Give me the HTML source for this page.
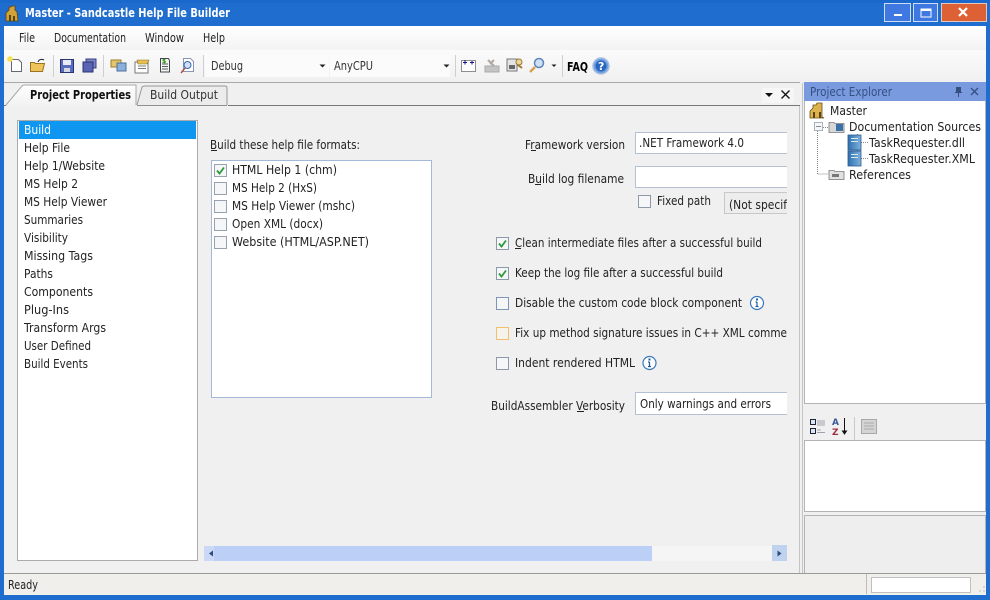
<!DOCTYPE html>
<html><head><meta charset="utf-8"><style>
html,body{margin:0;padding:0;background:#f0f0f0;overflow:hidden}
svg{display:block}
text{font-family:"DejaVu Sans",sans-serif;font-size:12px;fill:#222}
.b{font-weight:bold}
</style></head><body>
<svg width="990" height="600" viewBox="0 0 990 600" xmlns="http://www.w3.org/2000/svg">
<defs>
<linearGradient id="mb" x1="0" y1="0" x2="0" y2="1"><stop offset="0" stop-color="#fff"/><stop offset="1" stop-color="#f3f3f3"/></linearGradient>
<linearGradient id="tb" x1="0" y1="0" x2="0" y2="1"><stop offset="0" stop-color="#fbfbfb"/><stop offset="1" stop-color="#f0f0f0"/></linearGradient>
<linearGradient id="doc" x1="0" y1="0" x2="1" y2="0"><stop offset="0" stop-color="#2f6fb0"/><stop offset="1" stop-color="#7fb2dc"/></linearGradient>
<linearGradient id="tab" x1="0" y1="0" x2="0" y2="1"><stop offset="0" stop-color="#fff"/><stop offset="1" stop-color="#f2f2f2"/></linearGradient>
<clipPath id="rc"><rect x="490" y="120" width="297" height="300"/></clipPath>
</defs>
<rect width="990" height="600" fill="#1f6dce"/>
<rect y="0" width="990" height="3" fill="#1a68cb"/>
<rect x="4" y="26" width="982" height="569" fill="#f0f0f0"/>
<rect x="4" y="26" width="982" height="24" fill="url(#mb)"/>
<rect x="4" y="50" width="982" height="32" fill="url(#tb)"/>
<rect x="4" y="82" width="796" height="1" fill="#a8a8a8"/>

<!-- Title bar -->
<path d="M6 21V13l3-3V7h2l1-1h3v4l2 2 1 9z" fill="#d0a238" stroke="#5c4410" stroke-width=".8"/>
<path d="M9 21v-6h2v6zM13 21v-5h2v5z" fill="#5c4410"/>
<text class="b" x="25" y="17" textLength="205" lengthAdjust="spacingAndGlyphs" style="fill:#fff">Master - Sandcastle Help File Builder</text>
<rect x="884.500" y="3.500" width="26" height="18" fill="#3f78e0" stroke="#cfdcf5"/>
<rect x="894" y="14" width="8" height="2" fill="#fff"/>
<rect x="913.500" y="3.500" width="24" height="18" fill="#3f78e0" stroke="#cfdcf5"/>
<rect x="921" y="9" width="10" height="8" fill="none" stroke="#fff" stroke-width="1"/><rect x="921" y="9" width="10" height="2" fill="#fff"/>
<rect x="941.500" y="3.500" width="45" height="18" fill="#de6136" stroke="#e6c8b8"/>
<path d="M959 8l8 8M967 8l-8 8" stroke="#fff" stroke-width="2.200" fill="none"/>

<!-- Menu -->
<text x="19" y="42" textLength="16" lengthAdjust="spacingAndGlyphs">File</text>
<text x="54" y="42" textLength="72" lengthAdjust="spacingAndGlyphs">Documentation</text>
<text x="145" y="42" textLength="39" lengthAdjust="spacingAndGlyphs">Window</text>
<text x="203" y="42" textLength="22" lengthAdjust="spacingAndGlyphs">Help</text>

<!-- Toolbar icons -->
<path d="M11.500 59.500h7l3 3v9h-10z" fill="#fff" stroke="#667"/>
<circle cx="10" cy="59" r="2.800" fill="#f3e24a"/>
<path d="M30.500 62.500h4l1 1h9l-2 8h-12z" fill="#eec35a" stroke="#9a7420"/>
<path d="M38 62c1-3 4-3 6-2" fill="none" stroke="#223"/>
<rect x="60.500" y="59.500" width="13" height="13" fill="#5a6cc0" stroke="#2a3570"/><rect x="63" y="60" width="8" height="5" fill="#e8ecf8"/><rect x="64" y="68" width="6" height="4" fill="#d5d8e5"/>
<rect x="86" y="59" width="10" height="9" fill="#7a84c8" stroke="#3b4380"/><rect x="83" y="62" width="10" height="10" fill="#5a64b4" stroke="#2a3570"/>
<rect x="111" y="60" width="10" height="7" fill="#e7c667" stroke="#9a7d30"/><rect x="117" y="63" width="9" height="8" fill="#8cb0dc" stroke="#4a6f9e"/>
<rect x="135" y="62" width="13" height="11" fill="#fff" stroke="#777"/><path d="M137 60l12 0-2 4h-9z" fill="#e6c050" stroke="#8a6d20" stroke-width=".6"/><path d="M138 66h8M138 68.500h8" stroke="#777"/>
<path d="M160.500 58.500h8l1 2v11.500h-9z" fill="#f4f8e8" stroke="#445"/><path d="M162 64h6M162 66.500h6M162 69h6" stroke="#556"/><text x="162" y="63" style="font-size:6px;fill:#180" class="b">$</text>
<path d="M183.500 58.500h7l3 3v10h-10z" fill="#fff" stroke="#8a95b5"/><circle cx="187.500" cy="65" r="3.500" fill="#cfdff6" stroke="#3a66b0"/><path d="M185 68l-4 5" stroke="#b05040" stroke-width="1.500"/>
<path d="M53.500 55v22M103.500 55v22M203.500 55v22M455.500 55v22M562.500 55v22" stroke="#cfcfcf"/>

<!-- Combos -->
<rect x="205" y="55" width="124" height="22" fill="#fbfbfb"/>
<text x="211" y="70" textLength="32" lengthAdjust="spacingAndGlyphs" style="fill:#333">Debug</text>
<path d="M319.500 64.500h6l-3 3z" fill="#222"/>
<rect x="330" y="55" width="120" height="22" fill="#fbfbfb"/>
<text x="334" y="70" textLength="39" lengthAdjust="spacingAndGlyphs" style="fill:#333">AnyCPU</text>
<path d="M443.500 64.500h6l-3 3z" fill="#222"/>

<!-- Right toolbar icons -->
<rect x="461.500" y="60.500" width="14" height="11" fill="#fff" stroke="#222" stroke-dasharray="1 1"/><path d="M463 62.500h4M465 60.500v4M470 62.500h4M472 60.500v4" stroke="#14148c"/>
<path d="M485 66h14v6h-14z" fill="#c4c4c4" stroke="#aaa"/><path d="M488 60l6 6M494 60l-4 4" stroke="#b0a8a0" stroke-width="2"/>
<rect x="507" y="59" width="10" height="12" fill="#e4e4e4" stroke="#777"/><rect x="509" y="65" width="6" height="4" fill="#666"/><circle cx="519" cy="62" r="3" fill="#e8d8a0" stroke="#a07830"/><path d="M518 65l4 3" stroke="#a07830" stroke-width="2"/>
<circle cx="539" cy="63" r="4.500" fill="#cfe0f4" stroke="#5c86b8" stroke-width="1.500"/><path d="M535 67l-5 5" stroke="#d9a050" stroke-width="2.500"/>
<path d="M551.500 64.500h5l-2.500 2.500z" fill="#222"/>
<text class="b" x="567" y="71" textLength="21" lengthAdjust="spacingAndGlyphs" style="fill:#000;font-size:12px">FAQ</text>
<circle cx="601" cy="66" r="8" fill="#6f9ee0" stroke="#a8bfe0" stroke-width="1.500"/><circle cx="601" cy="66" r="5.500" fill="#2866c0"/><text class="b" x="598" y="70" style="font-size:11px;fill:#fff">?</text>

<!-- Tabs -->
<path d="M6 105L22 86q1-1 3-1H136v20" fill="url(#tab)" stroke="#a8a8a8"/>
<text class="b" x="30" y="99" textLength="101" lengthAdjust="spacingAndGlyphs" style="fill:#111">Project Properties</text>
<path d="M137 105l5-18q1-1 3-1H225q2 0 2 2v17" fill="#ececec" stroke="#999"/>
<text x="150" y="99" textLength="68" lengthAdjust="spacingAndGlyphs" style="fill:#333">Build Output</text>
<rect x="228" y="105" width="572" height="1" fill="#777"/><rect x="4" y="105" width="2" height="1" fill="#777"/><rect x="137" y="105" width="90" height="1" fill="#8f8f8f"/>
<rect x="762" y="88" width="32" height="15" fill="#f6f6f6"/>
<path d="M765 93h8l-4 4z" fill="#111"/>
<path d="M781.500 90.500l8 8M789.500 90.500l-8 8" stroke="#111" stroke-width="1.300"/>

<!-- Left list -->
<rect x="17.500" y="120.500" width="180" height="440" fill="#fff" stroke="#aaa"/>
<rect x="19" y="121" width="177" height="18" fill="#0f96f0"/>
<text x="24" y="134" textLength="27" lengthAdjust="spacingAndGlyphs" style="fill:#fff">Build</text>
<text x="24" y="152" textLength="46" lengthAdjust="spacingAndGlyphs">Help File</text>
<text x="24" y="170" textLength="81" lengthAdjust="spacingAndGlyphs">Help 1/Website</text>
<text x="24" y="188" textLength="54" lengthAdjust="spacingAndGlyphs">MS Help 2</text>
<text x="24" y="206" textLength="83" lengthAdjust="spacingAndGlyphs">MS Help Viewer</text>
<text x="24" y="224" textLength="59" lengthAdjust="spacingAndGlyphs">Summaries</text>
<text x="24" y="242" textLength="44" lengthAdjust="spacingAndGlyphs">Visibility</text>
<text x="24" y="260" textLength="69" lengthAdjust="spacingAndGlyphs">Missing Tags</text>
<text x="24" y="278" textLength="29" lengthAdjust="spacingAndGlyphs">Paths</text>
<text x="24" y="296" textLength="69" lengthAdjust="spacingAndGlyphs">Components</text>
<text x="24" y="314" textLength="45" lengthAdjust="spacingAndGlyphs">Plug-Ins</text>
<text x="24" y="332" textLength="82" lengthAdjust="spacingAndGlyphs">Transform Args</text>
<text x="24" y="350" textLength="67" lengthAdjust="spacingAndGlyphs">User Defined</text>
<text x="24" y="368" textLength="64" lengthAdjust="spacingAndGlyphs">Build Events</text>

<!-- Formats -->
<text x="210" y="149" textLength="150" lengthAdjust="spacingAndGlyphs">Build these help file formats:</text>
<rect x="211" y="150" width="6" height="1" fill="#222"/>
<rect x="211.500" y="160.500" width="220" height="237" fill="#fff" stroke="#a4b8d8"/>
<g fill="#f4f6f8" stroke="#98a2ae">
<rect x="214.500" y="164.500" width="12" height="12"/><rect x="214.500" y="182.500" width="12" height="12"/><rect x="214.500" y="200.500" width="12" height="12"/><rect x="214.500" y="218.500" width="12" height="12"/><rect x="214.500" y="236.500" width="12" height="12"/>
</g>
<path d="M217 170.500l2.500 3 4.500-6" fill="none" stroke="#2f9a3c" stroke-width="1.800"/>
<text x="232" y="174" textLength="105" lengthAdjust="spacingAndGlyphs">HTML Help 1 (chm)</text>
<text x="232" y="192" textLength="85" lengthAdjust="spacingAndGlyphs">MS Help 2 (HxS)</text>
<text x="232" y="210" textLength="123" lengthAdjust="spacingAndGlyphs">MS Help Viewer (mshc)</text>
<text x="232" y="228" textLength="91" lengthAdjust="spacingAndGlyphs">Open XML (docx)</text>
<text x="232" y="246" textLength="137" lengthAdjust="spacingAndGlyphs">Website (HTML/ASP.NET)</text>

<!-- Right form -->
<text x="525" y="149" textLength="100" lengthAdjust="spacingAndGlyphs">Framework version</text>
<rect x="531" y="150" width="5" height="1" fill="#222"/>
<text x="528" y="183" textLength="96" lengthAdjust="spacingAndGlyphs">Build log filename</text>
<rect x="535" y="184" width="6" height="1" fill="#222"/>
<g clip-path="url(#rc)">
<rect x="635.500" y="132.500" width="160" height="21" fill="#fff" stroke="#b4c0d4"/>
<text x="639" y="147" textLength="105" lengthAdjust="spacingAndGlyphs">.NET Framework 4.0</text>
<rect x="635.500" y="166.500" width="160" height="21" fill="#fff" stroke="#b4c0d4"/>
<rect x="724.500" y="192.500" width="70" height="21" fill="#ededed" stroke="#c8c8c8"/>
<text x="729" y="209" textLength="58" lengthAdjust="spacingAndGlyphs">(Not specif</text>
<text x="515" y="337" textLength="272" lengthAdjust="spacingAndGlyphs">Fix up method signature issues in C++ XML comme</text>
<rect x="635.500" y="392.500" width="160" height="22" fill="#fff" stroke="#b4c0d4"/>
<text x="640" y="408" textLength="131" lengthAdjust="spacingAndGlyphs">Only warnings and errors</text>
</g>
<rect x="638.500" y="195.500" width="12" height="12" fill="#f4f6f8" stroke="#8d98a8"/>
<text x="657" y="205" textLength="54" lengthAdjust="spacingAndGlyphs">Fixed path</text>

<g fill="#f4f6f8" stroke="#8d98a8">
<rect x="496.500" y="237.500" width="12" height="12"/><rect x="496.500" y="267.500" width="12" height="12"/><rect x="496.500" y="297.500" width="12" height="12" stroke="#7f95b5"/><rect x="496.500" y="357.500" width="12" height="12"/>
</g>
<rect x="496.500" y="327.500" width="12" height="12" fill="#f6f3ec" stroke="#f0bf70"/>
<path d="M499 243.500l2.500 3 4.500-6M499 273.500l2.500 3 4.500-6" fill="none" stroke="#2f9a3c" stroke-width="1.800"/>
<text x="515" y="247" textLength="247" lengthAdjust="spacingAndGlyphs">Clean intermediate files after a successful build</text>
<rect x="515" y="248" width="6" height="1" fill="#222"/>
<text x="515" y="277" textLength="208" lengthAdjust="spacingAndGlyphs">Keep the log file after a successful build</text>
<text x="515" y="307" textLength="227" lengthAdjust="spacingAndGlyphs">Disable the custom code block component</text>
<text x="515" y="367" textLength="120" lengthAdjust="spacingAndGlyphs">Indent rendered HTML</text>
<g fill="#fff" stroke="#3a78b8" stroke-width="1.200"><circle cx="757" cy="303" r="6.500"/><circle cx="649.500" cy="363" r="6.500"/></g>
<path d="M757 302v4.500M755.500 306.500h3M755.500 302h1.500M649.500 362v4.500M648 366.500h3M648 362h1.500" stroke="#1c5c9c" stroke-width="1.200" fill="none"/>
<rect x="756" y="298.500" width="2" height="2" fill="#1c5c9c"/><rect x="648.500" y="358.500" width="2" height="2" fill="#1c5c9c"/>
<text x="491" y="410" textLength="134" lengthAdjust="spacingAndGlyphs">BuildAssembler Verbosity</text>
<rect x="577" y="411" width="7" height="1" fill="#222"/>

<!-- Scrollbar -->
<rect x="204" y="546" width="583" height="15" fill="#f5f5f5"/>
<rect x="204" y="546" width="448" height="15" fill="#bccff6"/>
<rect x="204" y="546" width="10" height="15" fill="#cbd9f6"/>
<path d="M213 550.500l-4 3 4 3z" fill="#2f4a80"/>
<rect x="772" y="545" width="15" height="16" fill="#bfd2ee"/>
<path d="M777.500 550.500l4 3-4 3z" fill="#2f4a80"/>

<!-- Right panel -->
<path d="M799.500 106v467M802.500 83v490" stroke="#c4c4c4"/>
<rect x="804" y="82" width="182" height="18" fill="#7a9ae0"/>
<text x="810" y="96" textLength="82" lengthAdjust="spacingAndGlyphs" style="fill:#34507f">Project Explorer</text>
<path d="M956 87h5v5h1v1h-3v4h-1v-4h-3v-1h1z" fill="#34507f"/>
<path d="M971 88l7 7M978 88l-7 7" stroke="#34507f" stroke-width="1.300"/>
<rect x="804.500" y="100.500" width="181" height="303" fill="#fff" stroke="#b4b4b4"/>
<rect x="804" y="100" width="182" height="1" fill="#7a9ae0"/>

<path d="M810 118v-7l3-3v-3h3l1-2h5v14l2 1z" fill="#dcb34e" stroke="#66501a" stroke-width=".8"/><path d="M813 118v-6h2v6zM819 118v-6h2v6z" fill="#5c4410"/>
<text x="830" y="115" textLength="37" lengthAdjust="spacingAndGlyphs">Master</text>
<path d="M817.500 131v43h12M823 127.500h6M857.500 134v24.500h10M861 142.500h7M861 158.500h7" fill="none" stroke="#888" stroke-dasharray="1 1"/>
<rect x="814.500" y="122.500" width="8" height="8" fill="#f4f6f8" stroke="#a8b4c0"/><path d="M816 126.500h5" stroke="#889"/>
<path d="M829 122.500h5l1 1h9v9h-15z" fill="#d8d8d8" stroke="#777" stroke-width=".8"/><rect x="836" y="124" width="7" height="7" fill="#3a72a8"/>
<text x="849" y="131" textLength="132" lengthAdjust="spacingAndGlyphs">Documentation Sources</text>
<rect x="848" y="135" width="13" height="15" fill="url(#doc)" stroke="#2a5a90" stroke-width=".8"/><path d="M851 138.500h7M851 141.500h7" stroke="#dbe8f4"/>
<rect x="848" y="151" width="13" height="15" fill="url(#doc)" stroke="#2a5a90" stroke-width=".8"/><path d="M851 154.500h7M851 157.500h7" stroke="#dbe8f4"/>
<text x="869" y="147" textLength="96" lengthAdjust="spacingAndGlyphs">TaskRequester.dll</text>
<text x="869" y="163" textLength="106" lengthAdjust="spacingAndGlyphs">TaskRequester.XML</text>
<path d="M829 170.500h5l1 1h9v8h-15z" fill="#e0e0e0" stroke="#777" stroke-width=".8"/><rect x="832" y="174" width="7" height="3" fill="#777"/>
<text x="849" y="179" textLength="62" lengthAdjust="spacingAndGlyphs">References</text>

<!-- Property grid toolbar -->
<rect x="810.500" y="419.500" width="5" height="5" fill="#d8e8f4" stroke="#223"/><rect x="810.500" y="428.500" width="5" height="5" fill="#d8e8f4" stroke="#223"/>
<path d="M817 421h8M817 423h8M817 425h8M817 430h4M817 432.500h8" stroke="#889" stroke-width=".8"/>
<text class="b" x="832" y="425" style="font-size:9px;fill:#3a5a98">A</text>
<text class="b" x="832" y="435" style="font-size:9px;fill:#a03040">Z</text>
<path d="M844.500 418v15M842.500 431l2 3 2-3z" stroke="#111" fill="#111"/>
<path d="M854.500 417v23" stroke="#c8c8c8"/>
<rect x="861.500" y="419.500" width="15" height="14" fill="#d4d4d4" stroke="#a8a8a8"/><path d="M864 423h10M864 426h10M864 429h10" stroke="#aaa"/>
<rect x="804.500" y="440.500" width="181" height="71" fill="#fff" stroke="#b4b4b4"/>
<rect x="804.500" y="515.500" width="181" height="58" fill="#eeeeee" stroke="#b4b4b4"/>

<!-- Status bar -->
<rect x="4" y="573" width="982" height="1" fill="#9a9a9a"/>
<rect x="4" y="574" width="982" height="20" fill="#f1efec"/>
<rect x="4" y="594" width="982" height="1" fill="#f6f4e8"/>
<text x="8" y="589" textLength="30" lengthAdjust="spacingAndGlyphs">Ready</text>
<path d="M866.500 574v20" stroke="#bdbdbd"/>
<rect x="871.500" y="577.500" width="99" height="15" fill="#fff" stroke="#c0c0c0"/>
<path d="M979 591h2M983 591h2M983 587h2" stroke="#bbb"/>
</svg>
</body></html>
